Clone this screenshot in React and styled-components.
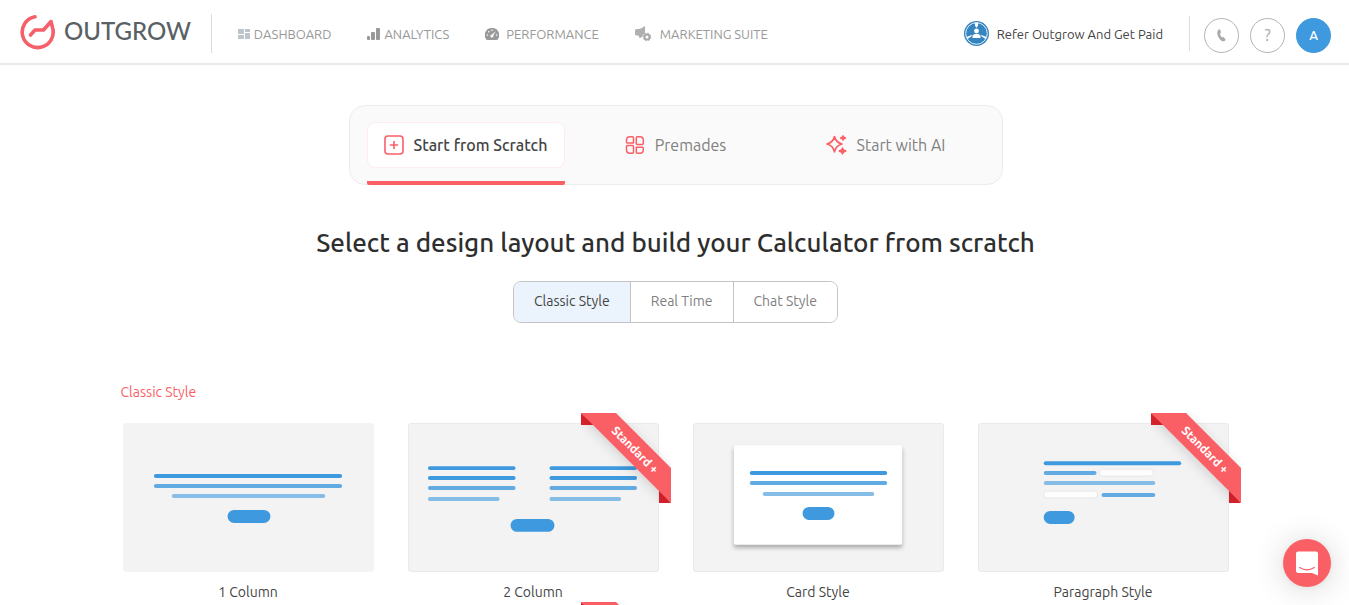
import React from "react";
import styled, { createGlobalStyle } from "styled-components";

const GlobalStyle = createGlobalStyle`
  * {
    box-sizing: border-box;
  }
  body {
    margin: 0;
    background: #fff;
    color: #444;
    font-family: Ubuntu, "Open Sans", sans-serif;
    font-size: 14px;
    line-height: 20px;
    overflow: hidden;
  }
  a {
    color: inherit;
    text-decoration: none;
  }
  button {
    font: inherit;
    color: inherit;
    cursor: pointer;
  }
`;

const Header = styled.header`
  display: flex;
  align-items: center;
  height: 65px;
  padding: 4px 18px 0 20px;
  border-bottom: 2px solid #e6e9ed;
  font-size: 13px;
`;

const Logo = styled.a`
  display: flex;
  align-items: center;
  gap: 8px;
  height: 39px;
  padding-right: 20px;
  border-right: 1px solid #d5dde3;
`;

const LogoName = styled.span`
  padding-bottom: 5px;
  font-family: Lato, sans-serif;
  font-size: 24px;
  line-height: 32px;
  font-weight: 500;
  color: #596165;
`;

const Nav = styled.nav`
  display: flex;
  flex: 1;
  gap: 36px;
  padding-left: 26px;
`;

const NavLink = styled.a`
  display: flex;
  align-items: center;
  gap: ${(props) => props.$gap}px;
  color: #999;
`;

const Refer = styled.a`
  display: flex;
  align-items: center;
  gap: 8px;
  height: 35px;
  padding-right: 26px;
  border-right: 1px solid #ddd;
`;

const Actions = styled.div`
  display: flex;
  gap: 11px;
  padding: 3px 0 0 14px;
`;

const RoundButton = styled.button`
  display: flex;
  align-items: center;
  justify-content: center;
  width: 35px;
  height: 35px;
  padding: 0;
  border: 1px solid ${(props) => (props.$filled ? "#3e99de" : "#b3b3b3")};
  border-radius: 50%;
  background: ${(props) => (props.$filled ? "#3e99de" : "#fff")};
  color: ${(props) => (props.$filled ? "#fff" : "#aaa")};
  font-size: ${(props) => (props.$filled ? 13 : 16)}px;
  font-weight: ${(props) => (props.$filled ? 500 : 400)};
`;

const Main = styled.main`
  display: flex;
  flex-direction: column;
  align-items: center;
  padding: 40px 0 0 2px;
`;

const Modes = styled.div`
  display: grid;
  grid-template-columns: repeat(3, 198px);
  gap: 12px;
  padding: 16px 17px 0;
  border: 1px solid #ececec;
  border-radius: 16px;
  background: #fafafa;
`;

const Mode = styled.button`
  height: 63px;
  padding: 0 0 13px;
  border: 0;
  border-bottom: 4px solid ${(props) => (props.$active ? "#fb5f66" : "transparent")};
  border-radius: 2px;
  background: none;
  margin-bottom: -1px;
  font-size: 16px;
  font-weight: ${(props) => (props.$active ? 500 : 400)};
  color: ${(props) => (props.$active ? "#444" : "#808080")};
`;

const ModeLabel = styled.span`
  display: flex;
  align-items: center;
  justify-content: center;
  gap: 10px;
  height: 46px;
  border: 1px solid ${(props) => (props.$active ? "#ffecec" : "transparent")};
  border-radius: 8px;
  background: ${(props) => (props.$active ? "#fff" : "none")};
`;

const Title = styled.h1`
  margin: 40px 0 20px;
  font-size: 26px;
  line-height: 36px;
  font-weight: 500;
  color: #2e2e2e;
`;

const Styles = styled.div`
  display: flex;
  border: 1px solid #c4c4c4;
  border-radius: 8px;
  overflow: hidden;
`;

const StyleButton = styled.button`
  height: 40px;
  padding: 0 20px 2px;
  border: 0;
  background: ${(props) => (props.$active ? "#ebf4fc" : "#fff")};
  color: ${(props) => (props.$active ? "#444" : "#808080")};
  & + & {
    border-left: 1px solid #c4c4c4;
  }
`;

const Layouts = styled.section`
  width: 100%;
  max-width: 1140px;
  margin-top: 59px;
  padding: 0 17px;
`;

const GroupName = styled.h2`
  margin: 0 0 21px -2px;
  font-size: 14px;
  line-height: 20px;
  font-weight: 400;
  color: #fb5f66;
`;

const LayoutGrid = styled.div`
  display: grid;
  grid-template-columns: repeat(4, 1fr);
  gap: 10px 34px;
`;

const LayoutCard = styled.a`
  position: relative;
  display: block;
  height: 179px;
  text-align: center;
`;

const Preview = styled.svg`
  display: block;
  width: 100%;
  height: 149px;
  margin-bottom: 10px;
  border: 1px solid ${(props) => (props.$plain ? "#f3f3f3" : "#e8ebeb")};
  border-radius: 3px;
  background: #f3f3f3;
`;

const Ribbon = styled.div`
  position: absolute;
  top: -10px;
  right: -12px;
  width: 90px;
  height: 90px;
  overflow: hidden;
  svg {
    display: block;
  }
`;

const RibbonText = styled.span`
  position: absolute;
  top: 27px;
  left: 14px;
  width: 80px;
  transform: rotate(45deg);
  font-size: 12px;
  line-height: 20px;
  font-weight: 700;
  color: #fff;
`;

const ChatButton = styled.button`
  position: fixed;
  right: 18px;
  bottom: 18px;
  display: flex;
  align-items: center;
  justify-content: center;
  width: 48px;
  height: 48px;
  padding: 0;
  border: 0;
  border-radius: 50%;
  background: #fb5f66;
  box-shadow: 0 1px 6px rgba(0, 0, 0, 0.06), 0 2px 32px rgba(0, 0, 0, 0.16);
`;

const LogoMark = () => (
  <svg width="36" height="38" viewBox="0 0 36 38" fill="none" stroke="#f5606a" strokeWidth="3.6" strokeLinecap="round" strokeLinejoin="round">
    <path d="M15 1.800A15.500 15.500 0 1 0 32.500 12.500L31 6.500L23.500 15H15L10.500 20" />
  </svg>
);

const DashboardIcon = () => (
  <svg width="12" height="10" viewBox="0 0 12 10" fill="#bcc5c9">
    <path d="M0 0h6v5H0zM7 0h5v3H7zM0 6h6v4H0zM7 4h5v6H7z" />
  </svg>
);

const AnalyticsIcon = () => (
  <svg width="13" height="12" viewBox="0 0 13 12" fill="#999">
    <rect y="8" width="3" height="4" rx="1" />
    <rect x="4" y="4" width="4" height="8" rx="1" />
    <rect x="9" width="4" height="12" rx="1" />
  </svg>
);

const PerformanceIcon = () => (
  <svg width="14" height="12" viewBox="0 0 14 12">
    <path d="M7 0a7 7 0 0 0-6 11q.3 1 1.200 1h9.600q.9 0 1.200-1A7 7 0 0 0 7 0z" fill="#999" />
    <g fill="#fff">
      <circle cx="2.500" cy="7" r=".8" />
      <circle cx="3.800" cy="3.700" r=".8" />
      <circle cx="7" cy="2.200" r=".8" />
      <circle cx="11.600" cy="7" r=".8" />
      <path d="M10.800 3.200L8.300 7.400A1.500 1.500 0 1 1 7 6.500z" />
    </g>
  </svg>
);

const MarketingIcon = () => (
  <svg width="17" height="15" viewBox="0 0 17 15">
    <path d="M0 4.500Q0 3 1.500 3H4Q7 3 9 .3Q10 0 10 1V7.500L7.500 9.500V11L4.500 12L3.500 9.500H1.500Q0 9.500 0 8z" fill="#b0b0b0" />
    <circle cx="12" cy="11" r="2.500" fill="none" stroke="#aaa" strokeWidth="2" />
    <circle cx="12" cy="11" r="3.500" fill="none" stroke="#aaa" strokeWidth="1.400" strokeDasharray="1.400 1.350" />
  </svg>
);

const ReferIcon = () => (
  <svg width="25" height="25" viewBox="0 0 25 25">
    <circle cx="12.500" cy="12.500" r="12.500" fill="#3585c0" />
    <circle cx="12.500" cy="12.500" r="10.800" fill="none" stroke="#e4f0f8" strokeWidth="1" />
    <g fill="#fff">
      <circle cx="12.500" cy="10" r="2.400" />
      <path d="M8.500 17v-2.500l2-1.500h4l2 1.500V17z" />
      <path d="M11 1.500h3v3l-1 2h-1l-1-2zM2.500 16l5-2 .4 1L3.500 18zM22.500 16l-5-2-.4 1 4.400 3z" />
    </g>
  </svg>
);

const PhoneIcon = () => (
  <svg width="9" height="13" viewBox="0 0 9 13" fill="#aaa">
    <path d="M1 1.200Q2.500-.5 3.200 1L4 3Q4 4 2.900 4.600Q3.300 7 5 8.400Q6 7.800 6.700 8.300L8.300 10Q9 11 7.500 12Q5 13.200 2.200 9.500Q-1 4.500 1 1.200z" />
  </svg>
);

const ScratchIcon = () => (
  <svg width="20" height="20" viewBox="0 0 20 20" fill="none" stroke="#fb5f66" strokeWidth="1.600" strokeLinecap="round">
    <rect x="1" y="1" width="18" height="18" rx="3" />
    <path d="M10 6.500v7M6.500 10h7" />
  </svg>
);

const PremadesIcon = () => (
  <svg width="20" height="20" viewBox="0 0 20 20" fill="none" stroke="#fb5f66" strokeWidth="1.500" strokeLinejoin="round">
    <path d="M8.500 8H2.500Q1.500 8 1.500 7V5Q1.500 1.700 5 1.700H7.500Q8.500 1.700 8.500 2.700z" />
    <path d="M11.300 2.700Q11.300 1.700 12.300 1.700H15Q18.300 1.700 18.300 5V8.500Q18.300 9.500 17.300 9.500H12.300Q11.300 9.500 11.300 8.500z" />
    <path d="M1.500 11.500Q1.500 10.500 2.500 10.500H7.500Q8.500 10.500 8.500 11.500V17.200Q8.500 18.200 7.500 18.200H5Q1.500 18.200 1.500 15z" />
    <path d="M11.300 12.300H17.300Q18.300 12.300 18.300 13.300V15Q18.300 18.200 15 18.200H12.300Q11.300 18.200 11.300 17.200z" />
  </svg>
);

const SparkIcon = () => (
  <svg width="21" height="20" viewBox="0 0 21 20" fill="none" stroke="#fb5f66" strokeLinejoin="round">
    <path strokeWidth="1.700" d="M8.500 1.500Q9.800 7.200 16 9Q9.800 10.800 8.500 16.800Q7.200 10.800 1 9Q7.200 7.200 8.500 1.500z" />
    <path strokeWidth="1.400" fill="#fb5f66" d="M17 .8l.7 1.400 1.800.8-1.800.8L17 5.200l-.7-1.400-1.800-.8 1.800-.8zM16.500 13l1 2 2.300 1-2.300 1-1 2-1-2-2.300-1 2.300-1z" />
  </svg>
);

const ChatIcon = () => (
  <svg width="22" height="25" viewBox="0 0 22 25">
    <path d="M2.500.5h17A2.300 2.300 0 0 1 22 3v21.500L16 22H2.500A2.300 2.300 0 0 1 0 19.500V3A2.300 2.300 0 0 1 2.500.5z" fill="#fff" />
    <path d="M3.700 16.500q7.300 4.600 14.600 0" fill="none" stroke="#fb5f66" strokeWidth="1.300" strokeLinecap="round" />
  </svg>
);

const SHADES = ["#3e99de", "#62abe2", "#86bde6"];

const Line = ({ x, y, w, shade = 0 }) => (
  <rect x={x} y={y} width={w} height="4" rx="2" fill={SHADES[shade]} />
);

const Pill = ({ x, y, w }) => (
  <rect x={x} y={y} width={w} height="13" rx="6.500" fill={SHADES[0]} />
);

const Blank = ({ x, y }) => (
  <rect x={x} y={y} width="54" height="7" rx="3" fill="#fdfdfd" stroke="#e8e8e8" />
);

const OneColumn = () => (
  <>
    <Line x={30} y={50} w={189} />
    <Line x={30} y={60} w={189} shade={1} />
    <Line x={48} y={70} w={154} shade={2} />
    <Pill x={104} y={86} w={43} />
  </>
);

const TwoColumn = () => (
  <>
    {[19, 141].map((x) => (
      <g key={x}>
        <Line x={x} y={42} w={88} />
        <Line x={x} y={52} w={88} />
        <Line x={x} y={62} w={88} shade={1} />
        <Line x={x} y={73} w={72} shade={2} />
      </g>
    ))}
    <Pill x={102} y={95} w={44} />
  </>
);

const CardStyle = () => (
  <>
    <rect x="40" y="21" width="169" height="100" rx="2" fill="#fff" style={{ filter: "drop-shadow(0 3px 2px rgba(0, 0, 0, 0.3))" }} />
    <Line x={56} y={47} w={138} />
    <Line x={56} y={57} w={138} shade={1} />
    <Line x={69} y={68} w={112} shade={2} />
    <Pill x={109} y={83} w={32} />
  </>
);

const ParagraphStyle = () => (
  <>
    <Line x={65} y={37} w={138} />
    <Line x={65} y={47} w={53} shade={1} />
    <Blank x={121} y={45} />
    <Line x={65} y={57} w={112} shade={2} />
    <Blank x={65} y={67} />
    <Line x={123} y={69} w={54} shade={1} />
    <Pill x={65} y={87} w={31} />
  </>
);

const CornerRibbon = ({ children }) => (
  <Ribbon>
    <svg width="90" height="90" viewBox="0 0 90 90">
      <path d="M0 0v12h14zM78 76v14h12z" fill="#dd222d" />
      <path d="M0 0h35l55 55v35z" fill="#fb5f66" style={{ filter: "drop-shadow(0 4px 6px rgba(0, 0, 0, 0.14))" }} />
    </svg>
    {children && <RibbonText>{children}</RibbonText>}
  </Ribbon>
);

const layouts = [
  { name: "1 Column", Art: OneColumn, plain: true },
  { name: "2 Column", Art: TwoColumn, ribbon: true, plan: "Standard +" },
  { name: "Card Style", Art: CardStyle },
  { name: "Paragraph Style", Art: ParagraphStyle, ribbon: true, plan: "Standard +" },
  { Art: OneColumn },
  { Art: TwoColumn, ribbon: true },
];

function App() {
  return (
    <>
      <GlobalStyle />
      <Header>
        <Logo href="#">
          <LogoMark />
          <LogoName>OUTGROW</LogoName>
        </Logo>
        <Nav>
          <NavLink href="#" $gap={4}>
            <DashboardIcon />
            DASHBOARD
          </NavLink>
          <NavLink href="#" $gap={4}>
            <AnalyticsIcon />
            ANALYTICS
          </NavLink>
          <NavLink href="#" $gap={7}>
            <PerformanceIcon />
            PERFORMANCE
          </NavLink>
          <NavLink href="#" $gap={8}>
            <MarketingIcon />
            MARKETING SUITE
          </NavLink>
        </Nav>
        <Refer href="#">
          <ReferIcon />
          Refer Outgrow And Get Paid
        </Refer>
        <Actions>
          <RoundButton aria-label="Call">
            <PhoneIcon />
          </RoundButton>
          <RoundButton>?</RoundButton>
          <RoundButton $filled>A</RoundButton>
        </Actions>
      </Header>

      <Main>
        <Modes>
          <Mode $active>
            <ModeLabel $active>
              <ScratchIcon />
              Start from Scratch
            </ModeLabel>
          </Mode>
          <Mode>
            <ModeLabel>
              <PremadesIcon />
              Premades
            </ModeLabel>
          </Mode>
          <Mode>
            <ModeLabel>
              <SparkIcon />
              Start with AI
            </ModeLabel>
          </Mode>
        </Modes>

        <Title>Select a design layout and build your Calculator from scratch</Title>

        <Styles>
          <StyleButton $active>Classic Style</StyleButton>
          <StyleButton>Real Time</StyleButton>
          <StyleButton>Chat Style</StyleButton>
        </Styles>

        <Layouts>
          <GroupName>Classic Style</GroupName>
          <LayoutGrid>
            {layouts.map(({ name, Art, plain, ribbon, plan }, i) => (
              <LayoutCard href="#" key={i}>
                <Preview $plain={plain} viewBox="0 0 250 147">
                  <Art />
                </Preview>
                {name}
                {ribbon && <CornerRibbon>{plan}</CornerRibbon>}
              </LayoutCard>
            ))}
          </LayoutGrid>
        </Layouts>
      </Main>

      <ChatButton aria-label="Open chat">
        <ChatIcon />
      </ChatButton>
    </>
  );
}

export default App;
